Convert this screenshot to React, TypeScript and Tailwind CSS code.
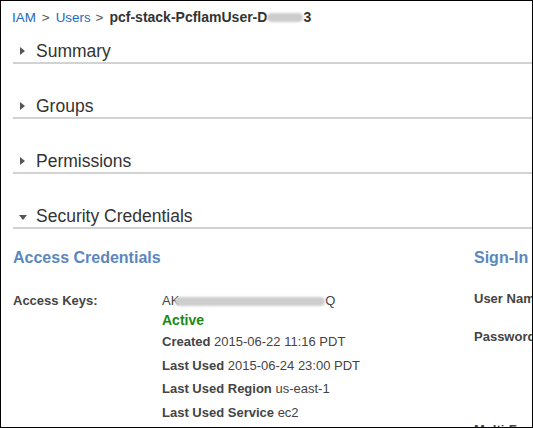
import React from "react";

type SectionProps = { title: string; open?: boolean };

function SectionHeader({ title, open = false }: SectionProps) {
  return (
    <div className="flex items-start h-[24px] border-b-2 border-[#d2d2d2] w-[560px] mt-[31px] first:mt-0">
      <div className="w-[23px] h-[22px] flex items-center justify-start pl-[6px]">
        {open ? (
          <div className="w-0 h-0 border-x-[4px] border-x-transparent border-t-[5px] border-t-[#555] mt-[2px]" />
        ) : (
          <div className="w-0 h-0 border-y-[4px] border-y-transparent border-l-[5px] border-l-[#555] ml-[1px]" />
        )}
      </div>
      <span className="text-[17.5px] leading-[22px] text-[#333]">{title}</span>
    </div>
  );
}

function Blur({ width }: { width: string }) {
  // redacted bits in the screenshot are just a soft grey smear
  return <span className={`inline-block ${width} h-[9px] rounded-full bg-[#cdcdcd] blur-[1.2px] align-middle`} />;
}

function Detail({ label, value }: { label: string; value: string }) {
  return (
    <div className="text-[13px] leading-[23.5px] text-[#444] whitespace-nowrap">
      <span className="font-bold">{label}</span> {value}
    </div>
  );
}

export default function App() {
  return (
    <div className="w-[533px] h-[428px] border border-black overflow-hidden bg-white font-['Liberation_Sans',Arial,sans-serif] text-[#333]">
      {/* Breadcrumb */}
      <div className="pl-[11px] mt-[8px] h-[16px] flex items-baseline text-[13.4px] leading-[16px] whitespace-nowrap">
        <span className="text-[#1b6ac0]">IAM</span>
        <span className="text-[#555] mx-[6px]">&gt;</span>
        <span className="text-[#1b6ac0]">Users</span>
        <span className="text-[#555] ml-[5px] mr-[6px]">&gt;</span>
        <span className="font-bold text-[14px] text-[#333]">pcf-stack-PcflamUser-D</span>
        <Blur width="w-[36px] self-center" />
        <span className="font-bold text-[14px] text-[#333]">3</span>
      </div>

      <div className="pl-[12px] mt-[15px]">
        <SectionHeader title="Summary" />
        <SectionHeader title="Groups" />
        <SectionHeader title="Permissions" />
        <SectionHeader title="Security Credentials" open />

        <div className="flex mt-[19px] whitespace-nowrap">
          {/* Access credentials column */}
          <div className="w-[461px] shrink-0">
            <h3 className="text-[16px] leading-[20px] font-bold text-[#5b87bd]">Access Credentials</h3>
            <div className="flex mt-[25px]">
              <div className="w-[149px] text-[13px] leading-[16px] font-bold text-[#444]">Access Keys:</div>
              <div className="flex flex-col">
                <div className="text-[13px] leading-[16px] text-[#444]">
                  AK
                  <span className="-ml-[4px]">
                    <Blur width="w-[150px]" />
                  </span>
                  Q
                </div>
                <div className="mt-[1px] text-[14px] leading-[20px] font-bold text-[#1a8a14]">Active</div>
                <Detail label="Created" value="2015-06-22 11:16 PDT" />
                <Detail label="Last Used" value="2015-06-24 23:00 PDT" />
                <Detail label="Last Used Region" value="us-east-1" />
                <Detail label="Last Used Service" value="ec2" />
              </div>
            </div>
          </div>

          {/* Sign-in column, cut off by the window edge */}
          <div className="flex flex-col">
            <h3 className="text-[16px] leading-[20px] font-bold text-[#5b87bd]">Sign-In Credentials</h3>
            <div className="mt-[23px] text-[13px] leading-[16px] font-bold text-[#444]">User Name</div>
            <div className="mt-[22px] text-[13px] leading-[16px] font-bold text-[#444]">Password</div>
            <div className="mt-[77px] text-[13px] leading-[16px] font-bold text-[#444]">Multi-Factor Authentication</div>
          </div>
        </div>
      </div>
    </div>
  );
}
